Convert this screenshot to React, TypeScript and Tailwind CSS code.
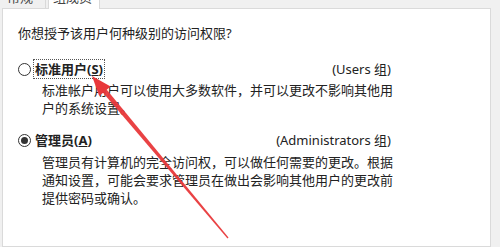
import React from "react";

const font = {
  fontFamily: '"Noto Sans", "Noto Sans CJK SC", sans-serif',
};

function Radio({ checked }: { checked?: boolean }) {
  return (
    <span className="flex h-[13px] w-[13px] shrink-0 items-center justify-center rounded-full border border-[#333333] bg-white">
      {checked && <span className="block h-[7px] w-[7px] rounded-full bg-[#333333]" />}
    </span>
  );
}

export default function App() {
  return (
    <div
      className="relative flex h-[247px] w-[500px] flex-col overflow-hidden bg-[#f0f0f0] text-[13px] text-[#222222]"
      style={font}
    >
      {/* tabs */}
      <div className="relative z-10 flex h-[9px] items-start -mb-px">
        <div className="h-[8px] w-[46px] overflow-hidden border-r border-[#d9d9d9] bg-[#f0f0f0]">
          <span className="mt-[-12px] block pl-[7px] leading-[18px] text-[#444]">常规</span>
        </div>
        <div className="ml-[2px] h-[9px] w-[52px] overflow-hidden border-l border-r border-[#d9d9d9] bg-white">
          <span className="mt-[-12px] block pl-[4px] leading-[18px] text-[#444]">组成员</span>
        </div>
      </div>

      {/* panel */}
      <div className="ml-[2px] w-[489px] flex-1 border border-[#dadada] bg-white pl-[15px] pt-[15px]">
        <div className="w-[373px]">
          <div className="leading-[18px]">你想授予该用户何种级别的访问权限?</div>

          <div className="mt-[17px] flex h-[20px] items-center">
            <Radio />
            <span className="ml-[2px] border border-dotted border-[#555] px-[1px] font-bold leading-[18px]">
              标准用户(<span className="underline">S</span>)
            </span>
            <span className="ml-auto leading-[18px]">(Users 组)</span>
          </div>
          <div className="mt-[2px] pl-[24px] leading-[18px]">
            <div className="whitespace-nowrap">标准帐户用户可以使用大多数软件，并可以更改不影响其他用</div>
            <div className="whitespace-nowrap">户的系统设置。</div>
          </div>

          <div className="mt-[13px] flex h-[20px] items-center">
            <Radio checked />
            <span className="ml-[2px] border border-transparent px-[1px] font-bold leading-[18px]">
              管理员(<span className="underline">A</span>)
            </span>
            <span className="ml-auto leading-[18px]">(Administrators 组)</span>
          </div>
          <div className="mt-[3px] pl-[24px] leading-[18px]">
            <div className="whitespace-nowrap">管理员有计算机的完全访问权，可以做任何需要的更改。根据</div>
            <div className="whitespace-nowrap">通知设置，可能会要求管理员在做出会影响其他用户的更改前</div>
            <div className="whitespace-nowrap">提供密码或确认。</div>
          </div>
        </div>
      </div>

      {/* red arrow overlay */}
      <svg
        className="pointer-events-none absolute left-0 top-0"
        width="500"
        height="247"
        viewBox="0 0 500 247"
      >
        <polygon points="106.4,89.2 102.8,92.4 227.5,238.6 228.5,237.6" fill="#e8383a" opacity="0.95" />
        <polygon points="92,76 110.6,86.5 99.2,96.1" fill="#e8383a" />
      </svg>
    </div>
  );
}
